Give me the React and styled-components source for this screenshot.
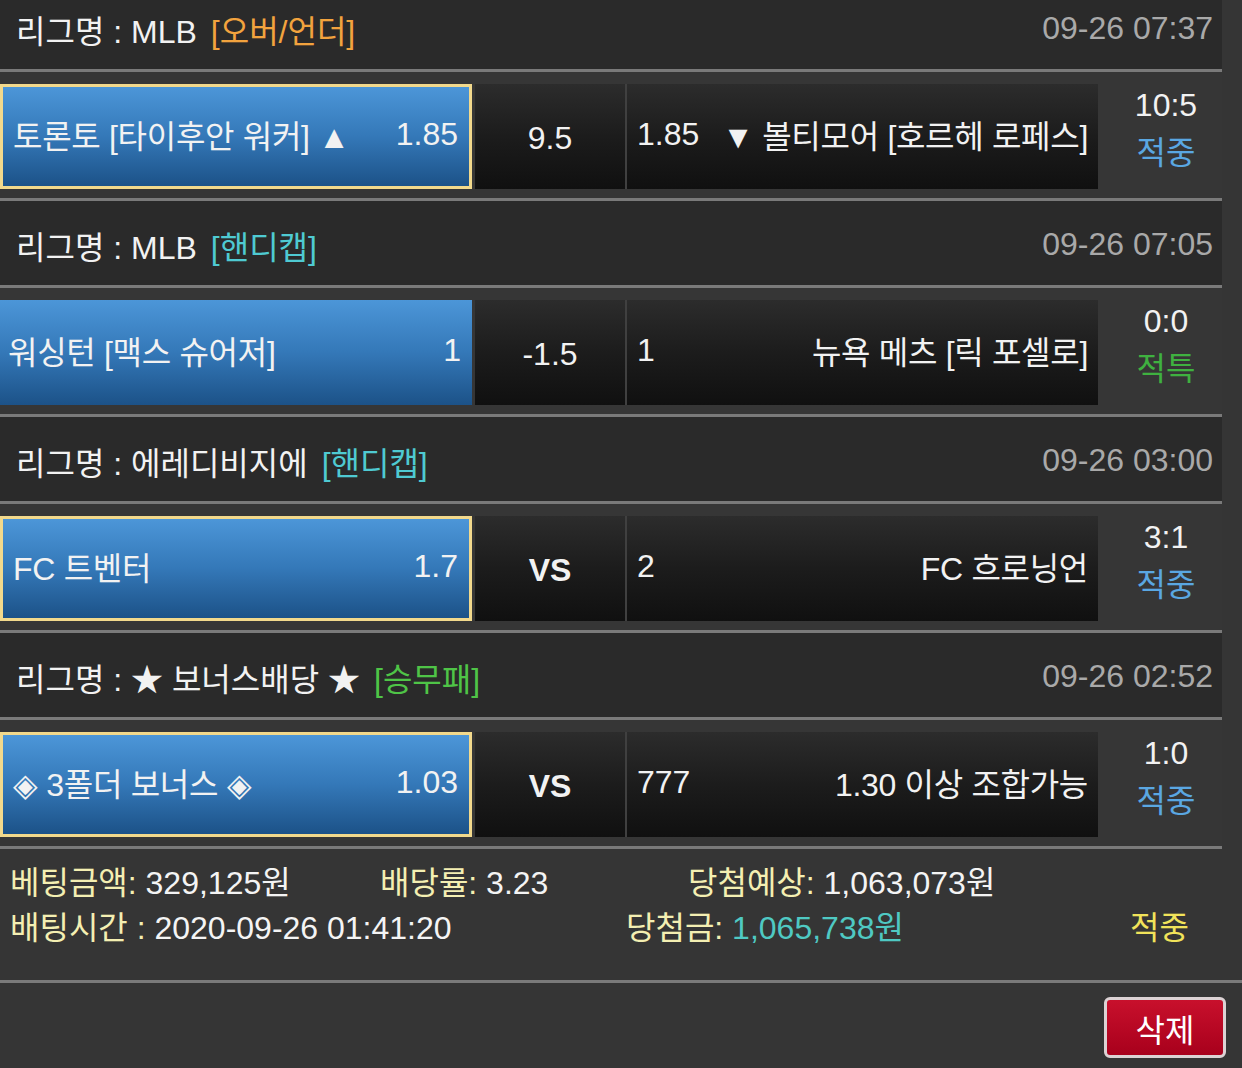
import React from 'react';
import styled, { createGlobalStyle } from 'styled-components';

const GlobalStyle = createGlobalStyle`
    html, body {
        margin: 0;
        padding: 0;
        background: #353535;
    }
    body {
        font-family: "Liberation Sans", Arial, "Noto Sans CJK KR", sans-serif;
        color: #f2f2f2;
        overflow: hidden;
    }
`

const Page = styled.div`
    width: 1242px;
    height: 1068px;
    background: #353535;
    overflow: hidden;
`

const GameList = styled.div`
    width: 1222px;
    margin-top: -15px;
`

const LeagueHeader = styled.div`
    display: flex;
    align-items: center;
    justify-content: space-between;
    height: 87px;
    padding: 3px 9px 0 16px;
    box-sizing: border-box;
    background: #2a2a2a;
    border-bottom: 3px solid #7a7a7a;
    font-size: 32px;
`

const Tag = styled.span`
    margin-left: 14px;
    color: ${props => props.color};
`

const Date = styled.div`
    color: #a9a9a9;
    font-size: 32px;
`

const GameRow = styled.div`
    display: flex;
    align-items: flex-start;
    height: 129px;
    padding-top: 12px;
    box-sizing: border-box;
    border-bottom: 3px solid #7a7a7a;
    background: #363636;
`

const HomeCell = styled.div`
    display: flex;
    align-items: center;
    justify-content: space-between;
    width: 472px;
    height: 105px;
    box-sizing: border-box;
    padding: 0 11px 5px ${props => props.picked ? '10px' : '8px'};
    background: linear-gradient(to bottom, #4c96d8 0%, #3478b8 50%, #1c5288 100%);
    border: ${props => props.picked ? '3px solid #f2d98c' : 'none'};
    font-size: 32px;
`

const TeamName = styled.span`
    letter-spacing: -0.3px;
    white-space: nowrap;
`

const DarkCell = styled.div`
    display: flex;
    align-items: center;
    height: 105px;
    box-sizing: border-box;
    background: linear-gradient(to bottom, #2c2c2c 0%, #1c1c1c 50%, #101010 100%);
    font-size: 32px;
`

const CenterCell = styled(DarkCell)`
    width: 150px;
    margin-left: 3px;
    justify-content: center;
    padding-top: 4px;
    font-weight: ${props => props.bold ? 700 : 400};
`

const AwayCell = styled(DarkCell)`
    width: 473px;
    justify-content: space-between;
    padding: 0 10px 5px 10px;
    border-left: 2px solid #404040;
`

const ScoreCell = styled.div`
    flex: 1;
    display: flex;
    flex-direction: column;
    align-items: center;
    justify-content: center;
    height: 117px;
    margin-top: -12px;
    padding: 0 0 4px 12px;
    box-sizing: border-box;
    font-size: 32px;
    line-height: 48px;
`

const Result = styled.div`
    color: ${props => props.color};
`

const Summary = styled.div`
    padding: 12px 0 29px 10px;
    border-bottom: 3px solid #7a7a7a;
    font-size: 32px;
    line-height: 45px;
`

const SummaryLine = styled.div`
    display: grid;
    grid-template-columns: ${props => props.columns};
    white-space: nowrap;
`

const Label = styled.span`
    color: #f4efb2;
`

const Value = styled.span`
    color: ${props => props.color || '#f4f4f4'};
`

const Status = styled.span`
    color: #f1e35a;
`

const Footer = styled.div`
    display: flex;
    justify-content: flex-end;
    padding: 14px 16px 0 0;
`

const DeleteButton = styled.button`
    width: 122px;
    height: 61px;
    border: 3px solid #dcd2d4;
    border-radius: 6px;
    background: linear-gradient(to bottom, #c8102c 0%, #a8001c 100%);
    color: #ffffff;
    font-family: inherit;
    font-size: 32px;
    padding: 0;
    cursor: pointer;
`

const games = [
    {
        league: 'MLB', tag: '[오버/언더]', tagColor: '#f2a33e', date: '09-26 07:37',
        home: '토론토 [타이후안 워커] ▲', homeOdds: '1.85', center: '9.5',
        awayOdds: '1.85', away: '▼ 볼티모어 [호르헤 로페스]',
        score: '10:5', result: '적중', resultColor: '#5aa7e2', picked: true,
    },
    {
        league: 'MLB', tag: '[핸디캡]', tagColor: '#4fcad2', date: '09-26 07:05',
        home: '워싱턴 [맥스 슈어저]', homeOdds: '1', center: '-1.5',
        awayOdds: '1', away: '뉴욕 메츠 [릭 포셀로]',
        score: '0:0', result: '적특', resultColor: '#3fb140', picked: false,
    },
    {
        league: '에레디비지에', tag: '[핸디캡]', tagColor: '#4fcad2', date: '09-26 03:00',
        home: 'FC 트벤터', homeOdds: '1.7', center: 'VS', bold: true,
        awayOdds: '2', away: 'FC 흐로닝언',
        score: '3:1', result: '적중', resultColor: '#5aa7e2', picked: true,
    },
    {
        league: '★ 보너스배당 ★', tag: '[승무패]', tagColor: '#4fc447', date: '09-26 02:52',
        home: '◈ 3폴더 보너스 ◈', homeOdds: '1.03', center: 'VS', bold: true,
        awayOdds: '777', away: '1.30 이상 조합가능',
        score: '1:0', result: '적중', resultColor: '#5aa7e2', picked: true,
    },
];

function Game({ game }) {
    return (
        <>
            <LeagueHeader>
                <div>
                    리그명 : {game.league}
                    <Tag color={game.tagColor}>{game.tag}</Tag>
                </div>
                <Date>{game.date}</Date>
            </LeagueHeader>
            <GameRow>
                <HomeCell picked={game.picked}>
                    <TeamName>{game.home}</TeamName>
                    <span>{game.homeOdds}</span>
                </HomeCell>
                <CenterCell bold={game.bold}>{game.center}</CenterCell>
                <AwayCell>
                    <span>{game.awayOdds}</span>
                    <TeamName>{game.away}</TeamName>
                </AwayCell>
                <ScoreCell>
                    <div>{game.score}</div>
                    <Result color={game.resultColor}>{game.result}</Result>
                </ScoreCell>
            </GameRow>
        </>
    );
}

export default function App() {
    return (
        <Page>
            <GlobalStyle />
            <GameList>
                {games.map((game, i) => <Game key={i} game={game} />)}
            </GameList>
            <Summary>
                <SummaryLine columns="370px 308px 1fr">
                    <span><Label>베팅금액:</Label> <Value>329,125원</Value></span>
                    <span><Label>배당률:</Label> <Value>3.23</Value></span>
                    <span><Label>당첨예상:</Label> <Value>1,063,073원</Value></span>
                </SummaryLine>
                <SummaryLine columns="616px 504px 1fr">
                    <span><Label>배팅시간 :</Label> <Value>2020-09-26 01:41:20</Value></span>
                    <span><Label>당첨금:</Label> <Value color="#4fc9c3">1,065,738원</Value></span>
                    <Status>적중</Status>
                </SummaryLine>
            </Summary>
            <Footer>
                <DeleteButton>삭제</DeleteButton>
            </Footer>
        </Page>
    );
}
